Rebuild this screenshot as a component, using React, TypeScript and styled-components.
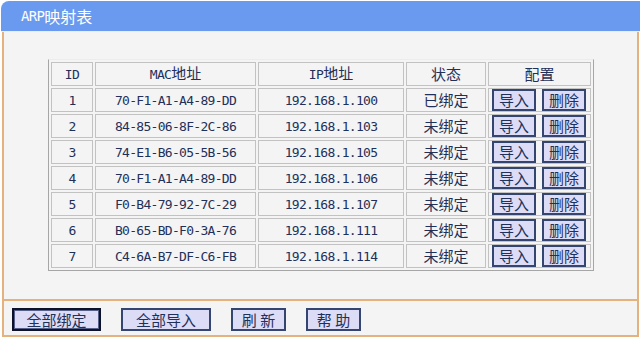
import React from "react";
import styled, { createGlobalStyle } from "styled-components";

const GlobalStyle = createGlobalStyle`
  html, body {
    margin: 0;
    padding: 0;
    background: #ffffff;
  }
`;

const colors = {
  title: "#6a9af0",
  frame: "#e4b37d",
  panel: "#f4f4f4",
  text: "#1f3059",
  cellLine: "#c2c2c2",
  tableLine: "#a6a6a6",
  button: "#dcdcf6",
  buttonLine: "#34456f",
};

const cjk = `"Noto Sans CJK SC", "Noto Sans", sans-serif`;

const Page = styled.div`
  width: 640px;
  height: 342px;
  display: flex;
  flex-direction: column;
  font-family: ${cjk};
  color: ${colors.text};
`;

const TitleBar = styled.div`
  margin: 1px 0 0 1px;
  height: 30px;
  padding-left: 20px;
  display: flex;
  align-items: center;
  background: ${colors.title};
  border-top-left-radius: 8px;
  border-bottom: 1px solid #e6edfb;
  color: #ffffff;
  font-size: 16px;
`;

const Mono = styled.span<{ $big?: boolean }>`
  font-family: "DejaVu Sans Mono", "Liberation Mono", monospace;
  font-size: ${(p) => (p.$big ? "14px" : "13px")};
  letter-spacing: -0.7px;
`;

const Panel = styled.div`
  margin: 0 1px 0 2px;
  border: 2px solid ${colors.frame};
  border-top: none;
  background: ${colors.panel};
  display: flex;
  flex-direction: column;
`;

const Body = styled.div`
  height: 269px;
  box-sizing: border-box;
  padding: 27px 0 0 44px;
  border-bottom: 2px solid ${colors.frame};
`;

const Table = styled.table`
  border-collapse: separate;
  border-spacing: 2px;
  table-layout: fixed;
  border: 1px solid ${colors.tableLine};
  border-top-color: #ececec;
`;

const Cell = styled.td<{ $w?: number }>`
  box-sizing: border-box;
  width: ${(p) => (p.$w ? `${p.$w}px` : "auto")};
  height: 24px;
  padding: 0;
  border: 1px solid ${colors.cellLine};
  text-align: center;
  vertical-align: middle;
  font-size: 15px;
  line-height: 20px;
  white-space: nowrap;
`;

const Actions = styled.div`
  display: flex;
  justify-content: space-between;
  padding: 0 4px 0 3px;
`;

const Button = styled.button<{ $w?: number; $primary?: boolean }>`
  box-sizing: border-box;
  width: ${(p) => (p.$w ? `${p.$w}px` : "44px")};
  height: ${(p) => (p.$w ? "23px" : "22px")};
  padding: 0;
  margin: 0;
  background: ${colors.button};
  border: 2px solid ${(p) => (p.$primary ? "#0c1228" : colors.buttonLine)};
  box-shadow: ${(p) => (p.$primary ? "inset 0 0 0 1px #56608a" : "none")};
  font-family: ${cjk};
  font-size: 15px;
  line-height: 18px;
  color: ${colors.text};
  white-space: pre;
  cursor: pointer;
`;

const Footer = styled.div`
  height: 34px;
  box-sizing: border-box;
  padding: 7px 0 0 8px;
  display: flex;
  gap: 20px;
`;

const rows = [
  ["70-F1-A1-A4-89-DD", "192.168.1.100", "已绑定"],
  ["84-85-06-8F-2C-86", "192.168.1.103", "未绑定"],
  ["74-E1-B6-05-5B-56", "192.168.1.105", "未绑定"],
  ["70-F1-A1-A4-89-DD", "192.168.1.106", "未绑定"],
  ["F0-B4-79-92-7C-29", "192.168.1.107", "未绑定"],
  ["B0-65-BD-F0-3A-76", "192.168.1.111", "未绑定"],
  ["C4-6A-B7-DF-C6-FB", "192.168.1.114", "未绑定"],
];

const App = () => (
  <Page>
    <GlobalStyle />
    <TitleBar>
      <Mono $big>ARP</Mono>映射表
    </TitleBar>
    <Panel>
      <Body>
        <Table>
          <tbody>
            <tr>
              <Cell $w={42}>
                <Mono>ID</Mono>
              </Cell>
              <Cell $w={161}>
                <Mono>MAC</Mono>地址
              </Cell>
              <Cell $w={146}>
                <Mono>IP</Mono>地址
              </Cell>
              <Cell $w={80}>状态</Cell>
              <Cell $w={103}>配置</Cell>
            </tr>
            {rows.map(([mac, ip, state], i) => (
              <tr key={i}>
                <Cell>
                  <Mono>{i + 1}</Mono>
                </Cell>
                <Cell>
                  <Mono>{mac}</Mono>
                </Cell>
                <Cell>
                  <Mono>{ip}</Mono>
                </Cell>
                <Cell>{state}</Cell>
                <Cell>
                  <Actions>
                    <Button>导入</Button>
                    <Button>删除</Button>
                  </Actions>
                </Cell>
              </tr>
            ))}
          </tbody>
        </Table>
      </Body>
      <Footer>
        <Button $w={89} $primary>
          全部绑定
        </Button>
        <Button $w={90}>全部导入</Button>
        <Button $w={55}>{"刷 新"}</Button>
        <Button $w={55}>{"帮 助"}</Button>
      </Footer>
    </Panel>
  </Page>
);

export default App;
